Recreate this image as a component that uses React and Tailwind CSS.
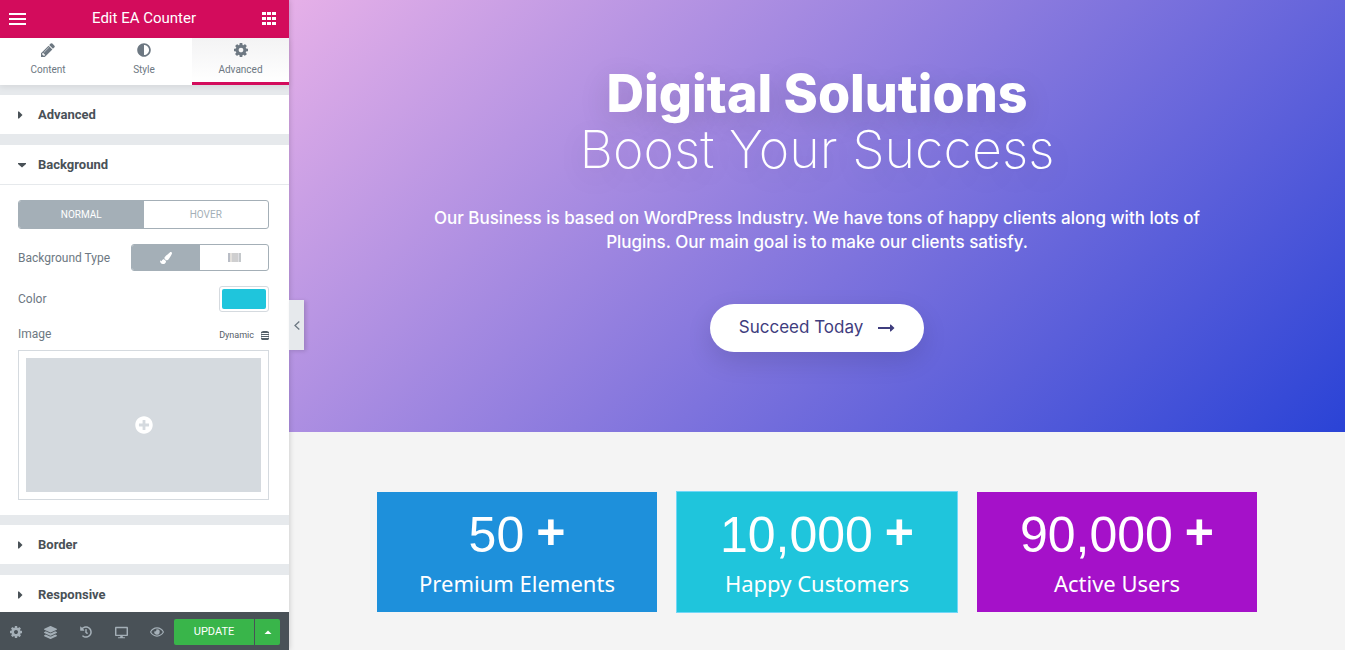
import React from 'react';
import {
  FaAdjust,
  FaDesktop,
  FaHistory,
  FaLayerGroup,
  FaPaintBrush,
  FaPlusCircle,
  FaRegEye,
} from 'react-icons/fa';

const MenuIcon = () => (
  <svg viewBox="0 0 17 12" className="w-[17px] h-3" fill="currentColor">
    <path d="M0 0h17v2H0zM0 5h17v2H0zM0 10h17v2H0z" />
  </svg>
);

const GridIcon = () => (
  <svg viewBox="0 0 14 13" className="w-[14px] h-[13px]" fill="currentColor">
    <path d="M0 0h4v3H0zM5 0h4v3H5zM10 0h4v3h-4zM0 5h4v3H0zM5 5h4v3H5zM10 5h4v3h-4zM0 10h4v3H0zM5 10h4v3H5zM10 10h4v3h-4z" />
  </svg>
);

const PencilIcon = ({ size }) => (
  <svg viewBox="0 0 1536 1536" width={size} height={size} className="shrink-0" fill="currentColor">
    <g transform="translate(0 1408) scale(1 -1)">
      <path d="M363 0l91 91-235 235-91-91v-107h128v-128h107zM886 928q0 22-22 22-10 0-17-7l-542-542q-7-7-7-17 0-22 22-22 10 0 17 7l542 542q7 7 7 17zM832 1120l416-416-832-832h-416v416zM1515 1024q0-53-37-90l-166-166-416 416 166 165q36 38 90 38 53 0 91-38l235-234q37-39 37-91z" />
    </g>
  </svg>
);

const CogIcon = ({ size }) => (
  <svg viewBox="0 0 1536 1536" width={size} height={size} className="shrink-0" fill="currentColor">
    <g transform="translate(0 1408) scale(1 -1)">
      <path d="M1024 640q0 106-75 181t-181 75-181-75-75-181 75-181 181-75 181 75 75 181zM1536 749v-222q0-12-8-23t-20-13l-185-28q-19-54-39-91 35-50 107-138 10-12 10-25t-9-23q-27-37-99-108t-94-71q-12 0-26 9l-138 108q-44-23-91-38-16-136-29-186-7-28-36-28h-222q-14 0-24.500 8.500t-11.500 21.500l-28 184q-49 16-90 37l-141-107q-10-9-25-9-14 0-25 11-126 114-165 168-7 10-7 23 0 12 8 23 15 21 51 66.500t54 70.500q-27 50-41 99l-183 27q-13 2-21 12.500t-8 23.500v222q0 12 8 23t19 13l186 28q14 46 39 92-40 57-107 138-10 12-10 24 0 10 9 23 26 36 98.500 107.500t94.500 71.500q13 0 26-10l138-107q44 23 91 38 16 136 29 186 7 28 36 28h222q14 0 24.500-8.500t11.500-21.500l28-184q49-16 90-37l142 107q9 9 24 9 13 0 25-10 129-119 165-170 7-8 7-22 0-12-8-23-15-21-51-66.500t-54-70.500q26-50 41-98l183-28q13-2 21-12.500t8-23.500z" />
    </g>
  </svg>
);

const GradientIcon = () => (
  <svg viewBox="0 0 13 9" className="w-[13px] h-[9px]">
    <path d="M0 0h2v9H0z" fill="#b9bdc6" />
    <path d="M2 0h2v9H2z" fill="#e3e0dc" />
    <path d="M4 0h6v9H4z" fill="#cfcfd0" />
    <path d="M10 0h1v9h-1z" fill="#e0e0e4" />
    <path d="M11 0h2v9h-2z" fill="#c4c8cb" />
  </svg>
);

const DynamicIcon = () => (
  <svg viewBox="0 0 8 9" className="w-2 h-[9px]" fill="#556068">
    <path d="M2 0h4l2 1v1H0V1z" />
    <path d="M0 2h1v6H0zM7 2h1v6H7z" opacity="0.4" />
    <path d="M0 3h8v1H0zM0 5h8v1H0zM0 7h8v1L7 9H1L0 8z" />
  </svg>
);

const Caret = ({ open }) => (
  <svg viewBox="0 0 8 8" className="w-2 h-2" fill="currentColor">
    <path d={open ? 'M0 2h8v1L4 6.500 0 3z' : 'M0 .5h1L4.500 4 1 7.500H0z'} />
  </svg>
);

const tabs = [
  { name: 'Content', icon: PencilIcon },
  { name: 'Style', icon: FaAdjust },
  { name: 'Advanced', icon: CogIcon, active: true },
];

const footerTools = [
  { name: 'Settings', icon: CogIcon, size: 12 },
  { name: 'Navigator', icon: FaLayerGroup, size: 13 },
  { name: 'History', icon: FaHistory, size: 12 },
  { name: 'Responsive Mode', icon: FaDesktop, size: 13 },
  { name: 'Preview Changes', icon: FaRegEye, size: 14 },
];

const counters = [
  { value: '50', label: 'Premium Elements', color: 'bg-[#1e90db]' },
  { value: '10,000', label: 'Happy Customers', color: 'bg-[#1fc5dc] outline outline-[#71d7f7]' },
  { value: '90,000', label: 'Active Users', color: 'bg-[#a511c9]' },
];

const Section = ({ title, open, children }) => (
  <section className="mt-[10px] bg-white shrink-0">
    <button className="flex items-center gap-3 w-full h-10 pl-[18px] border-b border-[#e6e9ec] text-[13px] font-bold text-[#495157]">
      <Caret open={open} />
      {title}
    </button>
    {children}
  </section>
);

const BackgroundControls = () => (
  <div className="pl-[18px] pr-5 py-[15px] text-[12px] text-[#6d7882]">
    <div className="flex h-[29px] border border-[#a4afb7] rounded-[3px] overflow-hidden text-[10px]">
      <button className="flex-1 bg-[#a4afb7] text-white">NORMAL</button>
      <button className="flex-1 text-[#a4afb7]">HOVER</button>
    </div>

    <div className="flex items-center justify-between mt-[15px]">
      <span>Background Type</span>
      <div className="flex w-[138px] h-[27px] border border-[#a4afb7] rounded-[3px] overflow-hidden">
        <button aria-label="Classic" className="flex flex-1 items-center justify-center bg-[#a4afb7] text-white">
          <FaPaintBrush size={12} />
        </button>
        <button aria-label="Gradient" className="flex flex-1 items-center justify-center">
          <GradientIcon />
        </button>
      </div>
    </div>

    <div className="flex items-center justify-between mt-[15px]">
      <span>Color</span>
      <button aria-label="Color" className="w-[50px] h-[26px] p-[2px] border border-[#d5dadf] rounded-[3px]">
        <span className="block h-full bg-[#1fc5dc] rounded-[2px]" />
      </button>
    </div>

    <div className="flex items-baseline justify-between h-[38px] pt-[13px]">
      <span>Image</span>
      <button className="flex items-center gap-[7px] text-[9px] text-[#556068]">
        Dynamic
        <DynamicIcon />
      </button>
    </div>

    <div className="p-[7px] border border-[#d5dadf]">
      <button aria-label="Choose Image" className="flex items-center justify-center w-full h-[134px] bg-[#d5dadf] text-white">
        <FaPlusCircle size={18} />
      </button>
    </div>
  </div>
);

const Panel = () => (
  <aside className="relative z-10 flex flex-col w-[289px] shrink-0 h-full bg-[#e6e9ec] font-[Roboto,sans-serif] shadow-[0_0_6px_rgba(0,0,0,0.2)]">
    <header className="flex items-center justify-between h-[38px] pl-[9px] pr-[13px] pb-px shrink-0 bg-[#d30c5c] text-white">
      <button aria-label="Menu"><MenuIcon /></button>
      <h1 className="text-[15px]">Edit EA Counter</h1>
      <button aria-label="Widgets"><GridIcon /></button>
    </header>

    <nav className="grid grid-cols-[1fr_1fr_97px] h-[47px] shrink-0 bg-white text-[#6d7882] shadow-[0_2px_6px_rgba(0,0,0,0.08)]">
      {tabs.map(({ name, icon: Icon, active }) => (
        <button
          key={name}
          className={`flex flex-col items-center gap-[5px] pt-[5px] border-b-[3px] text-[10px] ${
            active ? 'border-[#d30c5c] bg-linear-to-b from-[#f3f3f4] to-white' : 'border-transparent'
          }`}
        >
          <Icon size={14} />
          {name}
        </button>
      ))}
    </nav>

    <div className="flex flex-col flex-1 min-h-0 overflow-hidden">
      <Section title="Advanced" />
      <Section title="Background" open>
        <BackgroundControls />
      </Section>
      <Section title="Border" />
      <Section title="Responsive" />
    </div>

    <footer className="flex items-center h-[38px] pt-[2px] pr-[9px] shrink-0 bg-[#495157] text-[#a4afb7]">
      <div className="flex flex-1 justify-between pl-[9px] pr-[11px]">
        {footerTools.map(({ name, icon: Icon, size }) => (
          <button key={name} aria-label={name} className="flex items-center justify-center w-[13px]">
            <Icon size={size} className="shrink-0" />
          </button>
        ))}
      </div>
      <div className="flex gap-px h-[26px] text-white">
        <button className="w-20 bg-[#39b54a] rounded-l-[2px] text-[11px]">UPDATE</button>
        <button aria-label="Save Options" className="flex items-center justify-center w-[25px] bg-[#39b54a] rounded-r-[2px]">
          <svg viewBox="0 0 8 4" className="w-2 h-1" fill="currentColor">
            <path d="M0.500 4L4 .5 7.500 4z" />
          </svg>
        </button>
      </div>
    </footer>

    {/* collapse handle hangs over the preview */}
    <button
      aria-label="Hide Panel"
      className="absolute left-full top-[300px] flex items-center justify-center w-[15px] h-[50px] bg-[#e6e9ec] text-[#6d7882] shadow-[2px_1px_4px_rgba(0,0,0,0.15)]"
    >
      <svg viewBox="0 0 6 9" className="w-[6px] h-[9px]" fill="none" stroke="currentColor" strokeWidth="1.3">
        <path d="M5.300.5L1 4.500l4.300 4" />
      </svg>
    </button>
  </aside>
);

const Hero = () => (
  <section className="flex flex-col items-center h-[432px] pt-[66px] bg-[linear-gradient(137deg,#e6b0e8_0%,#8a7ade_49%,#2a43d6_100%)] text-center text-white font-[Inter,sans-serif]">
    <h2 className="text-[52px] leading-[56px] font-extrabold [text-shadow:0_8px_30px_rgba(0,0,0,0.15)]">
      Digital Solutions
      <span className="block font-extralight">Boost Your Success</span>
    </h2>
    <p className="max-w-[780px] mt-7 text-[17px] leading-6 font-medium">
      Our Business is based on WordPress Industry. We have tons of happy clients along with lots of
      Plugins. Our main goal is to make our clients satisfy.
    </p>
    <a
      href="#"
      className="flex items-center gap-[15px] h-12 mt-[50px] px-[29px] rounded-full bg-white text-[17px] text-[#3f3d7e] shadow-[0_9px_26px_rgba(0,0,0,0.12)]"
    >
      Succeed Today
      <svg viewBox="0 0 17 8" className="w-[17px] h-2" fill="currentColor">
        <path d="M0 3h12V.7q.2-.5.8-.2L16.500 4l-3.700 3.500q-.6.3-.8-.2V5H0z" />
      </svg>
    </a>
  </section>
);

const Counters = () => (
  <section className="grid grid-cols-3 gap-5 max-w-[880px] mx-auto mt-[60px] text-center text-white">
    {counters.map(({ value, label, color }) => (
      <div key={label} className={`h-[120px] pt-[14px] ${color}`}>
        <div className="flex justify-center gap-3 font-['Liberation_Sans',sans-serif] text-[50px] leading-[58px]">
          <span>{value}</span>
          <span className="font-bold leading-[52px]">+</span>
        </div>
        <div className="mt-[3px] font-['Noto_Sans',sans-serif] text-[22px] leading-8">{label}</div>
      </div>
    ))}
  </section>
);

const App = () => (
  <div className="flex h-screen overflow-hidden">
    <Panel />
    <main className="flex-1 min-w-0 bg-[#f4f4f4] overflow-hidden">
      <Hero />
      <Counters />
    </main>
  </div>
);

export default App;
